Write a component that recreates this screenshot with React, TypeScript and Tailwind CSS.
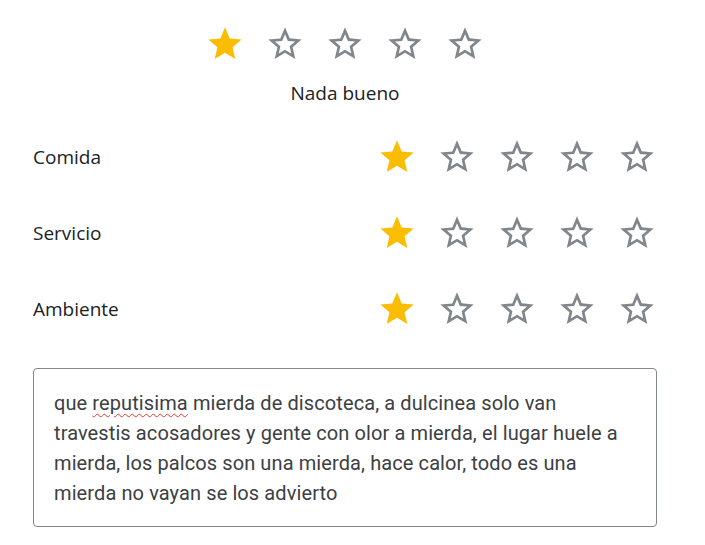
const StarFilled = () => (
  <svg viewBox="0 0 24 24" className="w-10 h-10" fill="#fbbc04">
    <path d="M12 17.27L18.18 21l-1.64-7.03L22 9.24l-7.19-.61L12 2 9.19 8.63 2 9.24l5.46 4.73L5.82 21z" />
  </svg>
)

const StarEmpty = () => (
  <svg viewBox="0 0 24 24" className="w-10 h-10" fill="#80868b">
    <path d="M22 9.24l-7.19-.62L12 2 9.19 8.63 2 9.24l5.46 4.73L5.82 21 12 17.27 18.18 21l-1.63-7.03L22 9.24zM12 15.4l-3.76 2.27 1-4.28-3.32-2.88 4.38-.38L12 6.1l1.71 4.04 4.38.38-3.32 2.88 1 4.28L12 15.4z" />
  </svg>
)

const Stars = ({ value }: { value: number }) => (
  <div className='flex flex-row gap-5'>
    {[1, 2, 3, 4, 5].map((n) => (n <= value ? <StarFilled key={n} /> : <StarEmpty key={n} />))}
  </div>
)

const App = () => {
  return (
    <div className='w-[705px] h-[545px] bg-white overflow-hidden' style={{ fontFamily: '"Open Sans", Roboto, sans-serif' }}>
      <div className='ml-[33px] w-[624px] flex flex-col pt-[24px]'>

        <div className='flex justify-center'>
          <Stars value={1} />
        </div>
        <div className='mt-[17px] text-center text-[19px] leading-6 text-[#202124]'>Nada bueno</div>

        <div className='mt-[14px] flex flex-col'>
          {['Comida', 'Servicio', 'Ambiente'].map((label) => (
            <div key={label} className='h-[76px] flex flex-row items-center justify-between'>
              <div className='text-[19px] text-[#202124]'>{label}</div>
              <Stars value={1} />
            </div>
          ))}
        </div>

        <div
          className='mt-[21px] h-[159px] border border-[#80868b] rounded-[4px] px-5 pt-[19px] text-[20px] leading-[30px] tracking-[0.1px] text-[#3c4043]'
          style={{ fontFamily: 'Roboto, sans-serif' }}
        >
          que <span className='underline decoration-wavy decoration-[#e53935] decoration-1 underline-offset-[3px]'>reputisima</span> mierda de discoteca, a dulcinea solo van travestis acosadores y gente con olor a mierda, el lugar huele a mierda, los palcos son una mierda, hace calor, todo es una mierda no vayan se los advierto
        </div>

      </div>
    </div>
  )
}

export default App
